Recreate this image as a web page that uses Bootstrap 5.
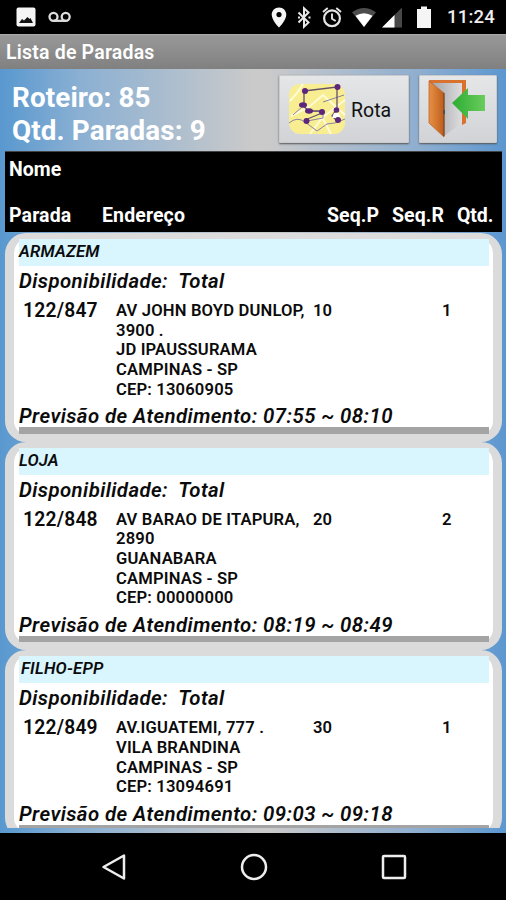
<!DOCTYPE html>
<html lang="pt-BR">
<head>
<meta charset="utf-8">
<meta name="viewport" content="width=device-width, initial-scale=1">
<title>Lista de Paradas</title>
<link href="https://cdn.jsdelivr.net/npm/bootstrap@5.3.0/dist/css/bootstrap.min.css" rel="stylesheet">
<style>
body{width:506px;height:900px;overflow:hidden;background:#000;font-family:Roboto,"Liberation Sans",sans-serif;color:#0b0b0b}
svg{display:block;flex:none}
.statusbar{height:34px;padding:0 11px 0 16px}
.clock{font-size:18.5px;font-weight:500;line-height:35px;color:#eee;letter-spacing:.2px;margin-left:2px}
.titlebar{height:35px;background:linear-gradient(#999,#808080);border-top:1px solid #aaa;color:#fff;font-size:19.5px;font-weight:600;line-height:35px;padding-left:6px;letter-spacing:.2px}
.screen{height:764px;background:linear-gradient(90deg,#5998cf 0,#8bb0d3 16%,#cacaca 50%,#cacaca 53%,#8eaed0 83%,#5c97d0 100%)}
.summary{height:82px;padding:6px 9px 0 12px}
.totals{font-size:27.8px;font-weight:700;line-height:33px;color:#fff;padding-top:6px;letter-spacing:.12px}
.tile,.tile:hover{height:68px;border:1px solid #c9cbcd;border-radius:1px;background:linear-gradient(#e5e6e8,#d2d3d6);box-shadow:0 1px 2px #555;padding:0;font-size:19.5px;color:#111}
.tile-route{width:130px;padding-left:8px}
.tile-route span{padding:3px 0 0 1px}
.tile-exit{width:78px}
.tile-pair{gap:10px}
.headings{height:81px;margin:0 4px 0 5px;padding:4px 8px 0 4px;background:#000;color:#fff;font-size:19.5px;font-weight:700;line-height:27px;border-top:1px solid #444}
.headings .second{margin-top:19px;letter-spacing:.12px}
.col-code{width:93px}
.col-seqp,.col-seqr{width:65px;letter-spacing:.05px}
.col-qty{width:37px;letter-spacing:-.1px}
.stops{height:595px;overflow:hidden;margin:1px 4px 0 5px}
.stop{border:solid #dbdbdb;border-width:6px 9px 8px;border-radius:21px;background:#fff;padding:0 4px 0 5px;height:208.6px}
.stop-short{height:189px}
.client{height:27px;background:#d9f6ff;font-size:16.7px;font-weight:600;line-height:25px;font-style:italic;letter-spacing:.2px}
.client-inset{padding-left:2px}
.available,.forecast{font-size:20.4px;font-weight:600;font-style:italic;white-space:pre;letter-spacing:.42px}
.available{height:30px;line-height:31px}
.details{font-size:16.6px;font-weight:600;line-height:19.65px;padding-top:5px}
.code{width:97px;padding-left:4px;font-size:19.3px;letter-spacing:.2px}
.address{width:197px;white-space:nowrap;letter-spacing:.16px}
.seq{width:129px}
.forecast{line-height:26px;height:24px;margin-top:4px}
.rule{height:6.3px;background:#a4a4a4}
.navkeys{height:67px;padding:0 98px 0 101px}
</style>
<script src="https://cdn.jsdelivr.net/npm/bootstrap@5.3.0/dist/js/bootstrap.bundle.min.js"></script>
</head>
<body>
<header class="statusbar d-flex align-items-center justify-content-between">
  <div class="d-flex align-items-center">
    <svg width="20" height="20" viewBox="0 0 20 20"><rect x=".5" y=".5" width="19" height="19" rx="2" fill="#f5f5f5"/><path d="M3 16l3-4 2 1.500L11.500 10l2 2 1-1L17 16z" fill="#111"/></svg>
    <svg class="ms-2" width="34" height="20" viewBox="0 0 34 20" fill="none" stroke="#ddd" stroke-width="2.3"><circle cx="9.5" cy="9.8" r="4"/><circle cx="21.7" cy="9.8" r="4"/><path d="M9.5 13.8h12.2"/></svg>
  </div>
  <div class="d-flex align-items-center">
    <svg width="174" height="34" viewBox="271 0 174 34">
      <path fill="#f5f5f5" fill-rule="evenodd" d="M279 7.500c-4.200 0-7.300 3.200-7.300 7.200 0 5.300 7.300 12.800 7.300 12.800s7.300-7.500 7.300-12.800c0-4-3.100-7.200-7.300-7.200zm0 4.500a2.600 2.600 0 1 1 0 5.200a2.600 2.600 0 0 1 0-5.200z"/>
      <path d="M298.500 12.500l10 10-4.500 4.200V8.300l4.500 4.200-10 10M298 17.500h2M308.500 17.500h2" fill="none" stroke="#e8e8e8" stroke-width="2"/>
      <circle cx="332" cy="18.300" r="7.900" fill="none" stroke="#e5e5e5" stroke-width="2.200"/><path d="M332 13.500v5.200l3.700 2.300M323 12l4.700-3.900M341 12l-4.700-3.900" fill="none" stroke="#e5e5e5" stroke-width="1.900"/>
      <path d="M352 12.300q12-8.500 24 0L364 27z" fill="#4c4c4c"/><path d="M355.500 15.800q8.500-5.200 17 0L364 27z" fill="#fff"/>
      <path d="M402 7.500V27.500H382z" fill="#484848"/><path d="M394.500 15v12.500H382z" fill="#fff"/>
      <path d="M417 9h4V6.500h6V9h4v19h-14z" fill="#f5f5f5"/>
    </svg>
    <span class="clock">11:24</span>
  </div>
</header>
<div class="titlebar">Lista de Paradas</div>
<main class="screen d-flex flex-column">
  <section class="summary d-flex justify-content-between">
    <div class="totals"><div>Roteiro: 85</div><div>Qtd. Paradas: 9</div></div>
    <div class="d-flex tile-pair">
      <button class="btn tile tile-route d-flex align-items-center" type="button">
        <svg width="58" height="52" viewBox="0 0 58 52"><rect x="1" y="1" width="56" height="50" rx="11" fill="#f8ee91"/><path d="M2 18q8-8 13-17M22 51l12-16 23-18M3 33l18-9 14-12 22 20M43 51l-9-17" fill="none" stroke="#fffbd8" stroke-width="2"/><path d="M1 40q8-7 16-1l12 9 10-7q9 0 18-5M5 32l10-9 7 5 13 1M35 19l21-7M19 38l16-3V28" fill="none" stroke="#8c82a4" stroke-width="1"/><path d="M16 8v15M16 8l33-4v25M14 22l7 6h13M17 37l17-7M49 26l-5 7 6 6" fill="none" stroke="#655069" stroke-width="1.300"/><path d="M46 30h5l2 5h-9z" fill="#fff"/><g fill="#5b267b"><circle cx="17" cy="8" r="3"/><circle cx="49.500" cy="4" r="3"/><ellipse cx="15" cy="22" rx="4" ry="2.700"/><ellipse cx="21" cy="28" rx="4" ry="2.700"/><circle cx="34" cy="29" r="3"/><circle cx="18.500" cy="38" r="3"/><circle cx="48.500" cy="27" r="2.800"/><circle cx="50" cy="37" r="3"/></g></svg>
        <span class="ms-1">Rota</span>
      </button>
      <button class="btn tile tile-exit" type="button" aria-label="Sair">
        <svg width="76" height="66" viewBox="0 0 76 66">
          <defs><linearGradient id="wood"><stop stop-color="#e89044"/><stop offset="1" stop-color="#bd5d1d"/></linearGradient><linearGradient id="leaf"><stop stop-color="#2cac32"/><stop offset="1" stop-color="#69cc5c"/></linearGradient><linearGradient id="opening"><stop stop-color="#a4a5a8"/><stop offset="1" stop-color="#dddde0"/></linearGradient></defs>
          <path d="M9 4h37v43l-4 2V8H10z" fill="#d9722f"/><path d="M12 7h30v40L24 60V17z" fill="url(#opening)"/><path d="M9 5l15 12v44L9 47z" fill="url(#wood)" stroke="#b65c22" stroke-width=".7"/><path d="M24 17v43" stroke="#6a4022"/><path d="M24 34v4" stroke="#4e4e4e" stroke-width="2"/><path d="M32 27L48 12v7h17v16H48v8z" fill="url(#leaf)"/>
        </svg>
      </button>
    </div>
  </section>
  <section class="headings">
    <div>Nome</div>
    <div class="second d-flex"><span class="col-code">Parada</span><span class="flex-grow-1">Endereço</span><span class="col-seqp">Seq.P</span><span class="col-seqr">Seq.R</span><span class="col-qty">Qtd.</span></div>
  </section>
  <section class="stops">
    <article class="stop">
      <div class="client">ARMAZEM</div>
      <div class="available">Disponibilidade:  Total</div>
      <div class="details d-flex"><div class="code">122/847</div><div class="address">AV JOHN BOYD DUNLOP,<br>3900 .<br>JD IPAUSSURAMA<br>CAMPINAS - SP<br>CEP: 13060905</div><div class="seq">10</div><div>1</div></div>
      <div class="forecast">Previsão de Atendimento: 07:55 ~ 08:10</div>
      <div class="rule"></div>
    </article>
    <article class="stop">
      <div class="client">LOJA</div>
      <div class="available">Disponibilidade:  Total</div>
      <div class="details d-flex"><div class="code">122/848</div><div class="address">AV BARAO DE ITAPURA,<br>2890<br>GUANABARA<br>CAMPINAS - SP<br>CEP: 00000000</div><div class="seq">20</div><div>2</div></div>
      <div class="forecast">Previsão de Atendimento: 08:19 ~ 08:49</div>
      <div class="rule"></div>
    </article>
    <article class="stop stop-short">
      <div class="client client-inset">FILHO-EPP</div>
      <div class="available">Disponibilidade:  Total</div>
      <div class="details d-flex"><div class="code">122/849</div><div class="address">AV.IGUATEMI, 777 .<br>VILA BRANDINA<br>CAMPINAS - SP<br>CEP: 13094691</div><div class="seq">30</div><div>1</div></div>
      <div class="forecast">Previsão de Atendimento: 09:03 ~ 09:18</div>
      <div class="rule"></div>
    </article>
  </section>
</main>
<nav class="navkeys d-flex align-items-center justify-content-between">
  <svg width="26" height="30" viewBox="0 0 26 30"><path d="M2.500 15L23 3.500v23z" fill="none" stroke="#eee" stroke-width="2.500" stroke-linejoin="round"/></svg>
  <svg width="30" height="30" viewBox="0 0 30 30"><circle cx="15" cy="15" r="12" fill="none" stroke="#eee" stroke-width="2.500"/></svg>
  <svg width="28" height="30" viewBox="0 0 28 30"><rect x="3" y="4" width="22" height="22" rx="1" fill="none" stroke="#eee" stroke-width="2.500"/></svg>
</nav>
</body>
</html>
